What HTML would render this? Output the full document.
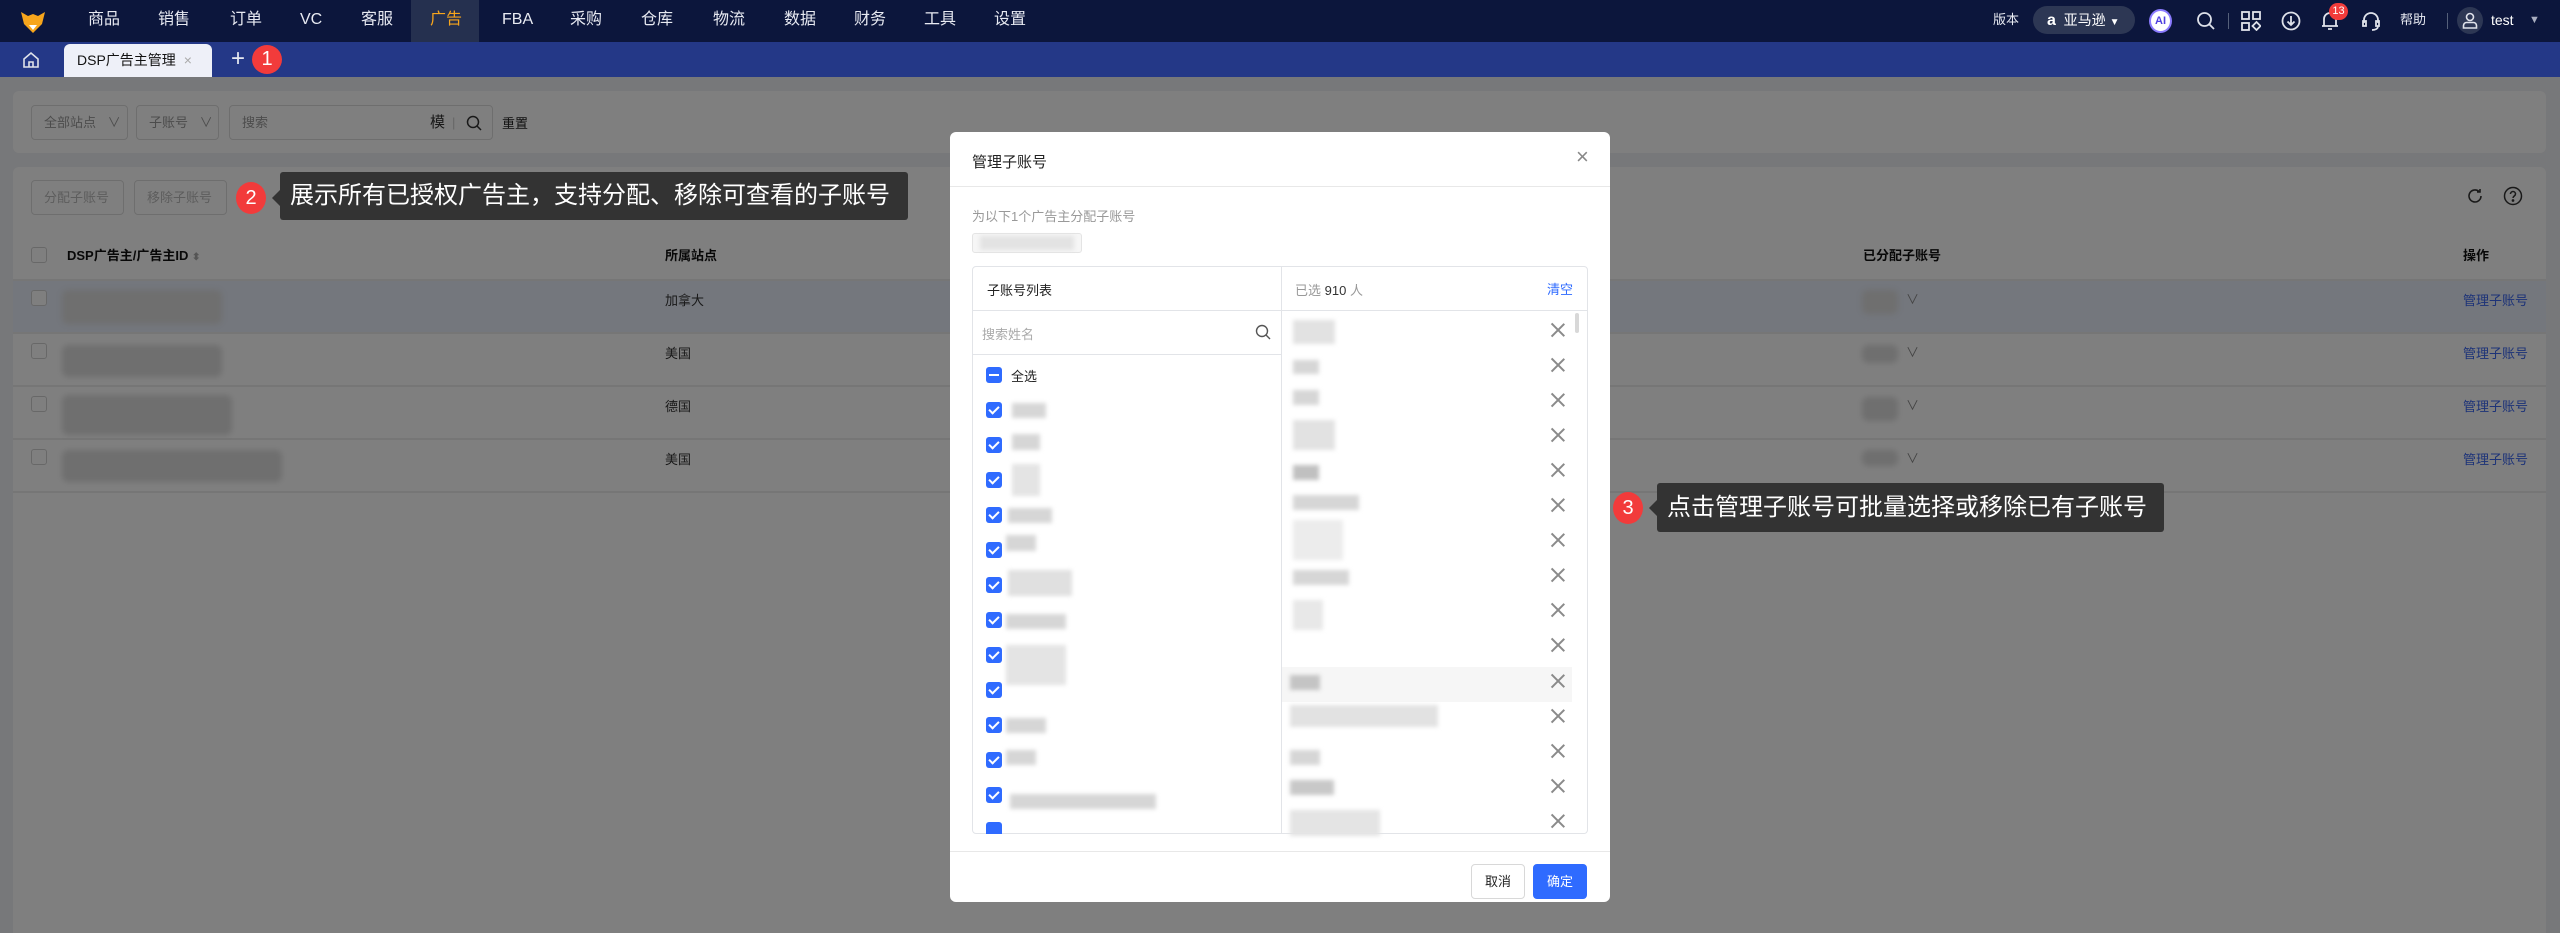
<!DOCTYPE html>
<html><head><meta charset="utf-8"><style>
*{box-sizing:border-box;margin:0;padding:0}
html,body{background:#eff0f4}
body{width:2560px;height:933px;overflow:hidden;position:relative;font-family:"Liberation Sans","Noto Sans CJK SC",sans-serif;font-size:14px;color:#222}
.abs{position:absolute}
.nav{left:0;top:0;width:2560px;height:42px;background:#0c163c}
.nav .m{position:absolute;top:0;height:42px;line-height:40px;color:#e8eaf2;font-size:16px}
.tabs{left:0;top:42px;width:2560px;height:35px;background:#243887}
.card{background:#fff;border-radius:6px}
.bx{position:absolute;border:1px solid #dcdcdc;border-radius:4px;color:#999;font-size:13px;line-height:33px;padding-left:12px;background:#fff}
.blur{position:absolute;background:#dedede;filter:blur(3px);border-radius:6px}
.wblur{position:absolute;background:#d6d6d6;filter:blur(2px)}
.row{position:absolute;left:13px;width:2533px;height:53px;border-top:2px solid #ececec}
.cb{position:absolute;width:16px;height:16px;border:1px solid #d0d0d0;border-radius:3px;background:#fff}
.tip{position:absolute;background:#333;color:#fff;border-radius:3px;font-size:24px;white-space:nowrap;z-index:20}
.circ{position:absolute;width:30px;height:32px;border-radius:50%;background:#f23b3b;color:#fff;text-align:center;line-height:32px;font-size:20px;z-index:20}
.chk{position:absolute;left:986px;width:16px;height:16px;border-radius:3px;background:#2f6bff;z-index:12}
.chk:after{content:"";position:absolute;left:5px;top:2px;width:4px;height:8px;border:solid #fff;border-width:0 2px 2px 0;transform:rotate(45deg)}
.x{position:absolute;left:1551px;width:14px;height:14px;z-index:12}
.x:before,.x:after{content:"";position:absolute;left:6px;top:-2px;width:1.5px;height:18px;background:#8a8a8a;transform:rotate(45deg)}
.x:after{transform:rotate(-45deg)}
.link{position:absolute;left:2463px;color:#3a66f0;font-size:13px}
.site{position:absolute;left:665px;color:#333;font-size:13px}
.mz{z-index:12}
</style></head><body>
<div class="abs nav" style="z-index:15">
 <svg class="abs" style="left:20px;top:10px" width="26" height="24" viewBox="0 0 26 24"><path d="M1 2 L8 6 L13 4 L18 6 L25 2 L22 14 L13 23 L4 14Z" fill="#f7a51c"/><path d="M9 15 L13 20 L17 15Z" fill="#fff"/></svg>
 <div class="m" style="left:88px">商品</div><div class="m" style="left:158px">销售</div><div class="m" style="left:230px">订单</div><div class="m" style="left:300px">VC</div><div class="m" style="left:361px">客服</div>
 <div class="abs" style="left:411px;top:0;width:68px;height:42px;background:#25304f"></div>
 <div class="m" style="left:430px;color:#f7a51c">广告</div><div class="m" style="left:502px">FBA</div><div class="m" style="left:570px">采购</div><div class="m" style="left:641px">仓库</div><div class="m" style="left:713px">物流</div><div class="m" style="left:784px">数据</div><div class="m" style="left:854px">财务</div><div class="m" style="left:924px">工具</div><div class="m" style="left:994px">设置</div>
 <div class="m" style="left:1993px;font-size:13px">版本</div>
 <div class="abs" style="left:2033px;top:6px;width:102px;height:28px;border-radius:14px;background:#2d3754;color:#fff;font-size:14px;line-height:28px;padding-left:14px"><b style="font-size:16px">a</b>&nbsp; 亚马逊 <span style="font-size:10px">▼</span></div>
 <div class="abs" style="left:2149px;top:9px;width:23px;height:24px;border-radius:50%;background:#fff;border:2px solid #8b7bff;color:#5040e0;font-size:11px;font-weight:bold;text-align:center;line-height:20px">AI</div>
 <svg class="abs" style="left:2196px;top:11px" width="20" height="20" viewBox="0 0 20 20" fill="none" stroke="#dfe2ea" stroke-width="1.8"><circle cx="8.5" cy="8.5" r="6.5"/><path d="M13.5 13.5L18 18"/></svg>
 <div class="abs" style="left:2228px;top:13px;width:1px;height:16px;background:#55607a"></div>
 <svg class="abs" style="left:2241px;top:11px" width="20" height="20" viewBox="0 0 20 20" fill="none" stroke="#dfe2ea" stroke-width="1.8"><rect x="1" y="1" width="7" height="7"/><rect x="12" y="1" width="7" height="7"/><rect x="1" y="12" width="7" height="7"/><path d="M15.5 11l4 4-4 4-4-4z"/></svg>
 <svg class="abs" style="left:2281px;top:11px" width="20" height="20" viewBox="0 0 20 20" fill="none" stroke="#dfe2ea" stroke-width="1.8"><circle cx="10" cy="10" r="8.5"/><path d="M10 5v9M6.5 10.5L10 14l3.5-3.5"/></svg>
 <svg class="abs" style="left:2320px;top:10px" width="20" height="22" viewBox="0 0 20 22" fill="none" stroke="#dfe2ea" stroke-width="1.8"><path d="M4 16V9a6 6 0 0112 0v7M2 16h16M8 19h4"/></svg>
 <div class="abs" style="left:2329px;top:3px;width:19px;height:17px;border-radius:9px;background:#f23b3b;color:#fff;font-size:11px;text-align:center;line-height:17px">13</div>
 <svg class="abs" style="left:2360px;top:10px" width="22" height="22" viewBox="0 0 22 22" fill="none" stroke="#dfe2ea" stroke-width="1.8"><path d="M4 13V10a7 7 0 0114 0v3M3 11h3v5H3zM16 11h3v5h-3zM18 16c0 3-3 4-6 4"/></svg>
 <div class="m" style="left:2400px;font-size:13px">帮助</div>
 <div class="abs" style="left:2447px;top:13px;width:1px;height:16px;background:#55607a"></div>
 <div class="abs" style="left:2457px;top:7px;width:26px;height:27px;border-radius:50%;background:#2d3754"></div>
 <svg class="abs" style="left:2462px;top:12px" width="16" height="17" viewBox="0 0 16 17" fill="none" stroke="#dfe2ea" stroke-width="1.6"><circle cx="8" cy="5" r="3.5"/><path d="M1.5 16v-2.5a3 3 0 013-3h7a3 3 0 013 3V16z"/></svg>
 <div class="m" style="left:2491px;font-size:14px;color:#fff">test</div>
 <div class="m" style="left:2529px;font-size:11px;color:#a9aec0">▼</div>
</div>
<div class="abs tabs" style="z-index:15">
 <svg class="abs" style="left:22px;top:9px" width="18" height="18" viewBox="0 0 18 18" fill="none" stroke="#dfe2ea" stroke-width="1.6"><path d="M2 8L9 2l7 6v8H2z M7 16v-5h4v5"/></svg>
 <div class="abs" style="left:64px;top:2px;width:148px;height:33px;background:#eef0f8;border-radius:6px 6px 0 0;font-size:14px;line-height:33px;padding-left:13px;color:#111">DSP广告主管理 <span style="color:#aaa;margin-left:4px">×</span></div>
 <div class="abs" style="left:231px;top:0;color:#e6e8f0;font-size:24px;line-height:33px">+</div>
 <div class="circ" style="left:252px;top:3px;height:29px;width:30px;line-height:29px">1</div>
</div>
<div class="abs card" style="left:13px;top:91px;width:2533px;height:62px"></div>
<div class="bx" style="left:31px;top:105px;width:97px;height:35px">全部站点 <span style="margin-left:8px">∨</span></div>
<div class="bx" style="left:136px;top:105px;width:83px;height:35px">子账号 <span style="margin-left:8px">∨</span></div>
<div class="bx" style="left:229px;top:105px;width:264px;height:35px">搜索<span style="position:absolute;left:200px;color:#333;font-size:15px">模</span><span style="position:absolute;left:222px;color:#ccc">|</span>
 <svg style="position:absolute;left:236px;top:9px" width="16" height="16" viewBox="0 0 16 16" fill="none" stroke="#333" stroke-width="1.5"><circle cx="7" cy="7" r="5.5"/><path d="M11 11l4 4"/></svg></div>
<div class="abs" style="left:502px;top:113px;font-size:13px;color:#222">重置</div>
<div class="abs card" style="left:13px;top:167px;width:2533px;height:766px;border-radius:6px 6px 0 0"></div>
<div class="bx" style="left:31px;top:180px;width:93px;height:35px;color:#bbb">分配子账号</div>
<div class="bx" style="left:134px;top:180px;width:93px;height:35px;color:#bbb">移除子账号</div>
<svg class="abs" style="left:2466px;top:187px" width="18" height="18" viewBox="0 0 18 18" fill="none" stroke="#333" stroke-width="1.6"><path d="M15 9a6 6 0 11-2-4.5M14 2v3h-3"/></svg>
<svg class="abs" style="left:2503px;top:186px" width="20" height="20" viewBox="0 0 20 20" fill="none" stroke="#333" stroke-width="1.5"><circle cx="10" cy="10" r="8.5"/><path d="M7.5 8a2.5 2.5 0 115 0c0 2-2.5 2-2.5 4"/><circle cx="10" cy="14.5" r=".6" fill="#333"/></svg>
<div class="cb" style="left:31px;top:247px"></div>
<div class="abs" style="left:67px;top:245px;font-size:13px;font-weight:bold;color:#111">DSP广告主/广告主ID <span style="color:#aaa;font-size:10px">⬍</span></div>
<div class="abs" style="left:665px;top:245px;font-size:13px;font-weight:bold;color:#111">所属站点</div>
<div class="abs" style="left:1863px;top:245px;font-size:13px;font-weight:bold;color:#111">已分配子账号</div>
<div class="abs" style="left:2463px;top:245px;font-size:13px;font-weight:bold;color:#111">操作</div>
<div class="row" style="top:279px;background:#e8eefa"></div>
<div class="row" style="top:332px"></div>
<div class="row" style="top:385px"></div>
<div class="row" style="top:438px"></div>
<div class="row" style="top:491px;height:2px"></div>
<div class="cb" style="left:31px;top:290px"></div><div class="cb" style="left:31px;top:343px"></div><div class="cb" style="left:31px;top:396px"></div><div class="cb" style="left:31px;top:449px"></div>
<div class="blur" style="left:62px;top:290px;width:160px;height:34px"></div>
<div class="blur" style="left:62px;top:345px;width:160px;height:32px"></div>
<div class="blur" style="left:62px;top:395px;width:170px;height:40px"></div>
<div class="blur" style="left:62px;top:450px;width:220px;height:32px"></div>
<div class="site" style="top:290px">加拿大</div><div class="site" style="top:343px">美国</div><div class="site" style="top:396px">德国</div><div class="site" style="top:449px">美国</div>
<div class="blur" style="left:1862px;top:290px;width:36px;height:24px"></div><div class="blur" style="left:1862px;top:345px;width:36px;height:18px"></div><div class="blur" style="left:1862px;top:397px;width:36px;height:24px"></div><div class="blur" style="left:1862px;top:450px;width:36px;height:16px"></div>
<div class="abs" style="left:1906px;top:289px;color:#888;font-size:13px">∨</div><div class="abs" style="left:1906px;top:342px;color:#888;font-size:13px">∨</div><div class="abs" style="left:1906px;top:395px;color:#888;font-size:13px">∨</div><div class="abs" style="left:1906px;top:448px;color:#888;font-size:13px">∨</div>
<div class="link" style="top:290px">管理子账号</div><div class="link" style="top:343px">管理子账号</div><div class="link" style="top:396px">管理子账号</div><div class="link" style="top:449px">管理子账号</div>
<!-- mask -->
<div style="position:fixed;left:0;top:77px;right:0;bottom:0;background:rgba(0,0,0,0.5);z-index:10"></div>
<div class="circ" style="left:236px;top:182px">2</div>
<div class="tip" style="left:280px;top:172px;width:628px;height:48px;line-height:48px;padding-left:10px">展示所有已授权广告主，支持分配、移除可查看的子账号</div>
<div class="abs" style="left:272px;top:190px;width:0;height:0;border:8px solid transparent;border-right-color:#333;border-left:0;z-index:20"></div>
<div class="circ" style="left:1613px;top:492px">3</div>
<div class="tip" style="left:1657px;top:483px;width:507px;height:49px;line-height:49px;padding-left:10px">点击管理子账号可批量选择或移除已有子账号</div>
<div class="abs" style="left:1649px;top:500px;width:0;height:0;border:8px solid transparent;border-right-color:#333;border-left:0;z-index:20"></div>
<div class="abs mz" style="left:950px;top:132px;width:660px;height:770px;background:#fff;border-radius:6px;overflow:hidden">
 <div class="abs" style="left:22px;top:19px;font-size:15px;color:#222">管理子账号</div>
 <div class="abs" style="left:626px;top:12px;font-size:22px;color:#888">×</div>
 <div class="abs" style="left:0;top:54px;width:660px;height:1px;background:#e8e8e8"></div>
 <div class="abs" style="left:22px;top:74px;font-size:13px;color:#999">为以下1个广告主分配子账号</div>
 <div class="abs" style="left:22px;top:101px;width:110px;height:20px;border:1px solid #e4e4e4;border-radius:3px;background:#f6f6f6"></div>
 <div class="wblur" style="left:30px;top:104px;width:94px;height:14px;background:#e3e3e3"></div>
 <div class="abs" style="left:22px;top:134px;width:616px;height:568px;border:1px solid #e2e4e8;border-radius:4px;overflow:hidden">
  <div class="abs" style="left:308px;top:0;width:1px;height:568px;background:#e2e4e8"></div>
  <div class="abs" style="left:0;top:43px;width:616px;height:1px;background:#e2e4e8"></div>
  <div class="abs" style="left:0;top:87px;width:308px;height:1px;background:#e2e4e8"></div>
  <div class="abs" style="left:14px;top:13px;font-size:13px;color:#222">子账号列表</div>
  <div class="abs" style="left:322px;top:13px;font-size:13px;color:#999">已选 <span style="color:#333">910</span> 人</div>
  <div class="abs" style="left:574px;top:12px;font-size:13px;color:#2f6bff">清空</div>
  <div class="abs" style="left:9px;top:57px;font-size:13px;color:#aaa">搜索姓名</div>
  <svg class="abs" style="left:282px;top:57px" width="16" height="16" viewBox="0 0 16 16" fill="none" stroke="#555" stroke-width="1.4"><circle cx="7" cy="7" r="5.5"/><path d="M11 11l4 4"/></svg>
  <div class="abs" style="left:602px;top:46px;width:4px;height:20px;border-radius:2px;background:#d8d8d8"></div>
  <div class="abs" style="left:309px;top:400px;width:290px;height:35px;background:#f6f6f6"></div>
 </div>
 <div class="abs" style="left:0;top:719px;width:660px;height:1px;background:#e8e8e8"></div>
 <div class="abs" style="left:521px;top:732px;width:54px;height:35px;border:1px solid #d8d8d8;border-radius:4px;text-align:center;line-height:33px;font-size:13px">取消</div>
 <div class="abs" style="left:583px;top:732px;width:54px;height:35px;background:#2f6bff;border-radius:4px;text-align:center;line-height:35px;font-size:13px;color:#fff">确定</div>
</div>
<div class="abs mz" style="left:986px;top:367px;width:16px;height:16px;border-radius:3px;background:#2f6bff"><div style="position:absolute;left:3px;top:7px;width:10px;height:2px;background:#fff"></div></div>
<div class="abs mz" style="left:1011px;top:366px;font-size:13px;color:#222">全选</div>
<div class="chk" style="top:402px"></div><div class="chk" style="top:437px"></div><div class="chk" style="top:472px"></div><div class="chk" style="top:507px"></div><div class="chk" style="top:542px"></div><div class="chk" style="top:577px"></div><div class="chk" style="top:612px"></div><div class="chk" style="top:647px"></div><div class="chk" style="top:682px"></div><div class="chk" style="top:717px"></div><div class="chk" style="top:752px"></div><div class="chk" style="top:787px"></div>
<div class="abs mz" style="left:986px;top:822px;width:16px;height:12px;border-radius:3px 3px 0 0;background:#2f6bff"></div>
<div class="wblur mz" style="left:1012px;top:403px;width:34px;height:15px"></div>
<div class="wblur mz" style="left:1012px;top:434px;width:28px;height:16px"></div>
<div class="wblur mz" style="left:1012px;top:464px;width:28px;height:32px;background:#e4e4e4"></div>
<div class="wblur mz" style="left:1008px;top:508px;width:44px;height:15px"></div>
<div class="wblur mz" style="left:1006px;top:535px;width:30px;height:16px"></div>
<div class="wblur mz" style="left:1008px;top:570px;width:64px;height:26px;background:#e0e0e0"></div>
<div class="wblur mz" style="left:1006px;top:614px;width:60px;height:15px"></div>
<div class="wblur mz" style="left:1006px;top:645px;width:60px;height:40px;background:#e4e4e4"></div>
<div class="wblur mz" style="left:1006px;top:718px;width:40px;height:15px"></div>
<div class="wblur mz" style="left:1006px;top:750px;width:30px;height:15px"></div>
<div class="wblur mz" style="left:1010px;top:794px;width:146px;height:15px"></div>
<div class="x" style="top:323px"></div><div class="x" style="top:358px"></div><div class="x" style="top:393px"></div><div class="x" style="top:428px"></div><div class="x" style="top:463px"></div><div class="x" style="top:498px"></div><div class="x" style="top:533px"></div><div class="x" style="top:568px"></div><div class="x" style="top:603px"></div><div class="x" style="top:638px"></div><div class="x" style="top:674px"></div><div class="x" style="top:709px"></div><div class="x" style="top:744px"></div><div class="x" style="top:779px"></div><div class="x" style="top:814px"></div>
<div class="wblur mz" style="left:1293px;top:320px;width:42px;height:24px;background:#e2e2e2"></div>
<div class="wblur mz" style="left:1293px;top:360px;width:26px;height:14px"></div>
<div class="wblur mz" style="left:1293px;top:390px;width:26px;height:15px"></div>
<div class="wblur mz" style="left:1293px;top:420px;width:42px;height:30px;background:#e2e2e2"></div>
<div class="wblur mz" style="left:1293px;top:465px;width:26px;height:15px;background:#c0c0c0"></div>
<div class="wblur mz" style="left:1293px;top:495px;width:66px;height:15px"></div>
<div class="wblur mz" style="left:1293px;top:520px;width:50px;height:40px;background:#ececec"></div>
<div class="wblur mz" style="left:1293px;top:570px;width:56px;height:15px"></div>
<div class="wblur mz" style="left:1293px;top:600px;width:30px;height:30px;background:#e8e8e8"></div>
<div class="wblur mz" style="left:1290px;top:675px;width:30px;height:15px;background:#c4c4c4"></div>
<div class="wblur mz" style="left:1290px;top:705px;width:148px;height:22px;background:#e2e2e2"></div>
<div class="wblur mz" style="left:1290px;top:750px;width:30px;height:15px"></div>
<div class="wblur mz" style="left:1290px;top:780px;width:44px;height:15px;background:#c8c8c8"></div>
<div class="wblur mz" style="left:1290px;top:810px;width:90px;height:26px;background:#e4e4e4"></div>
</body></html>
